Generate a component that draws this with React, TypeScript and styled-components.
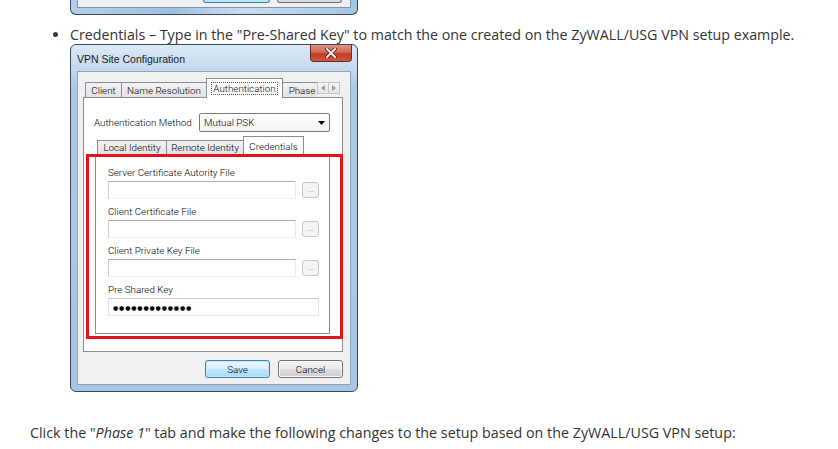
import React from "react";
import styled, { createGlobalStyle } from "styled-components";

const Global = createGlobalStyle`
  html, body { margin: 0; padding: 0; background: #ffffff; }
  body { font-family: "Open Sans", "Liberation Sans", sans-serif; color: #333333; }
  * { box-sizing: border-box; }
`;

const Page = styled.div`
  width: 838px;
  height: 449px;
  overflow: hidden;
  display: flex;
  flex-direction: column;
`;

/* ---------- previous dialog fragment ---------- */
const FragmentFrame = styled.div`
  margin-left: 70px;
  width: 288px;
  height: 15px;
  border: 1px solid #3b4856;
  border-top: none;
  border-radius: 0 0 6px 6px;
  background: linear-gradient(to right, #b4cfea, #9fbfe0 35%, #c9ddf1 60%, #a6c5e4);
  padding: 0 6px 6px;
  display: flex;
`;

const FragmentBody = styled.div`
  flex: 1;
  background: #f0f0f0;
  border: 1px solid #7f95ad;
  border-top: none;
  display: flex;
  justify-content: flex-end;
  align-items: flex-start;
  gap: 7px;
  padding-right: 8px;
`;

const StubButton = styled.div<{ $primary?: boolean; $w: number }>`
  width: ${(p) => p.$w}px;
  height: 3px;
  border: 1px solid ${(p) => (p.$primary ? "#3c7fb1" : "#707070")};
  border-top: none;
  border-radius: 0 0 3px 3px;
  background: ${(p) => (p.$primary ? "#bfe3f6" : "#dcdcdc")};
`;

/* ---------- text ---------- */
const BulletLine = styled.div`
  margin-top: 10px;
  height: 19px;
  display: flex;
  align-items: center;
  padding-left: 53px;
  font-size: 14.25px;
  line-height: 19px;
  white-space: nowrap;
`;

const Bullet = styled.span`
  width: 5px;
  height: 5px;
  border-radius: 50%;
  background: #3a3a3a;
  margin-right: 12px;
`;

const Paragraph = styled.p`
  margin: 31px 0 0 30px;
  font-size: 14.3px;
  line-height: 20px;
  white-space: nowrap;
  em { font-style: italic; }
`;

/* ---------- window ---------- */
const Window = styled.div`
  margin-left: 70px;
  width: 288px;
  height: 348px;
  border: 1px solid #3b4856;
  border-radius: 6px;
  background: linear-gradient(to bottom, #dce9f6 0px, #c3d8ee 26px, #adc9e6 40px, #a8c6e5 100%);
  padding: 0 6px 6px;
  display: flex;
  flex-direction: column;
  font-family: Roboto, "Liberation Sans", Arial, sans-serif;
  font-weight: 300;
  color: #000000;
`;

const TitleBar = styled.div`
  height: 27px;
  display: flex;
  justify-content: space-between;
  align-items: flex-start;
`;

const Title = styled.span`
  margin-top: 8px;
  font-family: "Liberation Sans", Arial, sans-serif;
  font-weight: 400;
  font-size: 10.5px;
  line-height: 12px;
  color: #1a1a1a;
`;

const CloseButton = styled.div`
  width: 42px;
  height: 17px;
  margin-right: -1px;
  border: 1px solid #6e2a1e;
  border-top: none;
  border-radius: 0 0 4px 4px;
  background: linear-gradient(to bottom, #e29483 0%, #d3674f 45%, #c23a24 55%, #cc5a42 100%);
  display: flex;
  align-items: center;
  justify-content: center;
`;

const Body = styled.div`
  flex: 1;
  background: #f0f0f0;
  border: 1px solid #8ea4bb;
  padding: 6px 7px 6px 5px;
  display: flex;
  flex-direction: column;
  font-size: 9.8px;
`;

/* ---------- tabs ---------- */
const TabStrip = styled.div<{ $h: number }>`
  height: ${(p) => p.$h}px;
  margin-bottom: -1px;
  position: relative;
  z-index: 1;
  display: flex;
  align-items: flex-start;
`;

const TabsViewport = styled.div<{ $w?: number }>`
  ${(p) => (p.$w ? `width: ${p.$w}px;` : "flex: 1;")}
  height: 100%;
  overflow: hidden;
  display: flex;
  align-items: flex-end;
  padding-left: 2px;
`;

const Tab = styled.div<{ $w: number; $active?: boolean; $h: number }>`
  flex: none;
  width: ${(p) => p.$w}px;
  height: ${(p) => (p.$active ? p.$h : p.$h - 5)}px;
  margin-bottom: ${(p) => (p.$active ? 0 : 1)}px;
  border: 1px solid #898c95;
  border-bottom: none;
  margin-left: -1px;
  background: ${(p) =>
    p.$active ? "#ffffff" : "linear-gradient(to bottom, #f2f2f2, #e3e3e3)"};
  position: relative;
  z-index: ${(p) => (p.$active ? 2 : 1)};
  display: flex;
  justify-content: center;
  align-items: ${(p) => (p.$active ? "flex-start" : "center")};
  padding-top: ${(p) => (p.$active ? 4 : 0)}px;
  white-space: nowrap;
  &:first-child { margin-left: 0; }
`;

const FocusLabel = styled.span`
  outline: 1px dotted #555;
  outline-offset: 0px;
  padding: 0 1px;
  line-height: 11px;
`;

const ArrowGroup = styled.div`
  margin-top: 4px;
  margin-left: 1px;
  display: flex;
`;

const ArrowButton = styled.div`
  width: 12px;
  height: 12px;
  border: 1px solid #c2c4ca;
  background: linear-gradient(to bottom, #f6f6f6, #e6e6e6);
  display: flex;
  align-items: center;
  justify-content: center;
  margin-left: -1px;
`;

const Panel = styled.div<{ $h: number }>`
  height: ${(p) => p.$h}px;
  border: 1px solid #898c95;
  background: #ffffff;
  position: relative;
  display: flex;
  flex-direction: column;
`;

const OuterPanelContent = styled.div`
  padding: 15px 12px 0 10px;
  display: flex;
  flex-direction: column;
`;

const MethodRow = styled.div`
  display: flex;
  align-items: center;
  height: 19px;
`;

const MethodLabel = styled.span`
  width: 106px;
`;

const Combo = styled.div`
  width: 132px;
  height: 19px;
  border: 1px solid #7a7a7a;
  border-radius: 2px;
  background: linear-gradient(to bottom, #ffffff, #f1f1f1);
  display: flex;
  align-items: center;
  justify-content: space-between;
  padding: 0 4px 0 4px;
`;

const InnerTabs = styled.div`
  margin-top: 4px;
  margin-left: 1px;
  width: 235px;
  display: flex;
  flex-direction: column;
`;

const FieldArea = styled.div`
  padding: 12px 0 0 12px;
  display: flex;
  flex-direction: column;
`;

const Field = styled.div`
  display: flex;
  flex-direction: column;
  margin-bottom: 7px;
`;

const FieldLabel = styled.span`
  height: 12px;
  line-height: 12px;
  margin-bottom: 2px;
`;

const FieldRow = styled.div`
  display: flex;
  align-items: center;
`;

const TextBox = styled.div<{ $w: number; $full?: boolean }>`
  width: ${(p) => p.$w}px;
  height: 18px;
  border: 1px solid;
  border-color: #abadb3 #e8eaee #eef1f4 #c9ccd2;
  background: #ffffff;
  display: flex;
  align-items: center;
  padding-left: 4px;
  ${(p) => (p.$full ? "border-color: #c9ccd3 #e3e6ea #e3e9ef #dde0e5;" : "")}
`;

const Dots = styled.span`
  font-family: "DejaVu Sans", sans-serif;
  font-weight: 400;
  font-size: 6px;
  letter-spacing: 0.85px;
  color: #000;
`;

const BrowseButton = styled.div`
  width: 17px;
  height: 16px;
  margin-left: 6px;
  border: 1px solid #c6c7c9;
  border-radius: 3px;
  background: #f4f4f4;
  color: #9a9a9a;
  font-family: "Liberation Sans", Arial, sans-serif;
  font-weight: 400;
  font-size: 8px;
  display: flex;
  align-items: flex-end;
  justify-content: center;
  padding-bottom: 3px;
  line-height: 8px;
`;

const Highlight = styled.div`
  position: absolute;
  left: 2px;
  top: 56px;
  width: 257px;
  height: 185px;
  border: 3px solid #e3121b;
  z-index: 3;
  pointer-events: none;
`;

const ButtonRow = styled.div`
  margin-top: 8px;
  display: flex;
  justify-content: flex-end;
  gap: 8px;
`;

const DialogButton = styled.div<{ $primary?: boolean }>`
  width: 65px;
  height: 18px;
  border: 1px solid ${(p) => (p.$primary ? "#3c7fb1" : "#707070")};
  border-radius: 3px;
  background: ${(p) =>
    p.$primary
      ? "linear-gradient(to bottom, #eaf6fd 0%, #d9f0fc 50%, #bee6fd 51%, #a7d9f5 100%)"
      : "linear-gradient(to bottom, #f2f2f2 0%, #ebebeb 50%, #dddddd 51%, #cfcfcf 100%)"};
  box-shadow: ${(p) => (p.$primary ? "inset 0 0 0 1px #c5eafd" : "inset 0 0 0 1px #fcfcfc")};
  display: flex;
  align-items: center;
  justify-content: center;
`;

const CloseIcon = () => (
  <svg width="12" height="10" viewBox="0 0 12 10">
    <path d="M2 1 L10 9 M10 1 L2 9" stroke="#5a2016" strokeWidth="3.4" strokeLinecap="square" />
    <path d="M2 1 L10 9 M10 1 L2 9" stroke="#ffffff" strokeWidth="1.8" strokeLinecap="square" />
  </svg>
);

const TriLeft = () => (
  <svg width="4" height="6" viewBox="0 0 4 6">
    <path d="M4 0 L0 3 L4 6 Z" fill="#9a9a9a" />
  </svg>
);
const TriRight = () => (
  <svg width="4" height="6" viewBox="0 0 4 6">
    <path d="M0 0 L4 3 L0 6 Z" fill="#9a9a9a" />
  </svg>
);
const TriDown = () => (
  <svg width="7" height="4" viewBox="0 0 7 4">
    <path d="M0 0 L7 0 L3.5 4 Z" fill="#000" />
  </svg>
);

const FileField = ({ label }: { label: string }) => (
  <Field>
    <FieldLabel>{label}</FieldLabel>
    <FieldRow>
      <TextBox $w={188} />
      <BrowseButton>...</BrowseButton>
    </FieldRow>
  </Field>
);

export default function App() {
  return (
    <Page>
      <Global />
      <FragmentFrame>
        <FragmentBody>
          <StubButton $primary $w={67} />
          <StubButton $w={65} />
        </FragmentBody>
      </FragmentFrame>

      <BulletLine>
        <Bullet />
        Credentials – Type in the "Pre-Shared Key" to match the one created on the ZyWALL/USG VPN setup example.
      </BulletLine>

      <Window>
        <TitleBar>
          <Title>VPN Site Configuration</Title>
          <CloseButton>
            <CloseIcon />
          </CloseButton>
        </TitleBar>
        <Body>
          <TabStrip $h={20}>
            <TabsViewport $w={234}>
              <Tab $w={37} $h={20}>Client</Tab>
              <Tab $w={86} $h={20}>Name Resolution</Tab>
              <Tab $w={77} $h={20} $active>
                <FocusLabel>Authentication</FocusLabel>
              </Tab>
              <Tab $w={40} $h={20}>Phase</Tab>
            </TabsViewport>
            <ArrowGroup>
              <ArrowButton>
                <TriLeft />
              </ArrowButton>
              <ArrowButton>
                <TriRight />
              </ArrowButton>
            </ArrowGroup>
          </TabStrip>
          <Panel $h={255}>
            <OuterPanelContent>
              <MethodRow>
                <MethodLabel>Authentication Method</MethodLabel>
                <Combo>
                  <span>Mutual PSK</span>
                  <TriDown />
                </Combo>
              </MethodRow>
              <InnerTabs>
                <TabStrip $h={19}>
                  <TabsViewport>
                    <Tab $w={70} $h={19}>Local Identity</Tab>
                    <Tab $w={78} $h={19}>Remote Identity</Tab>
                    <Tab $w={61} $h={19} $active>Credentials</Tab>
                  </TabsViewport>
                </TabStrip>
                <Panel $h={180}>
                  <FieldArea>
                    <FileField label="Server Certificate Autority File" />
                    <FileField label="Client Certificate File" />
                    <FileField label="Client Private Key File" />
                    <Field>
                      <FieldLabel>Pre Shared Key</FieldLabel>
                      <TextBox $w={211} $full>
                        <Dots>●●●●●●●●●●●●●</Dots>
                      </TextBox>
                    </Field>
                  </FieldArea>
                </Panel>
              </InnerTabs>
            </OuterPanelContent>
            <Highlight />
          </Panel>
          <ButtonRow>
            <DialogButton $primary>Save</DialogButton>
            <DialogButton>Cancel</DialogButton>
          </ButtonRow>
        </Body>
      </Window>

      <Paragraph>
        Click the "<em>Phase 1</em>" tab and make the following changes to the setup based on the ZyWALL/USG VPN setup:
      </Paragraph>
    </Page>
  );
}
